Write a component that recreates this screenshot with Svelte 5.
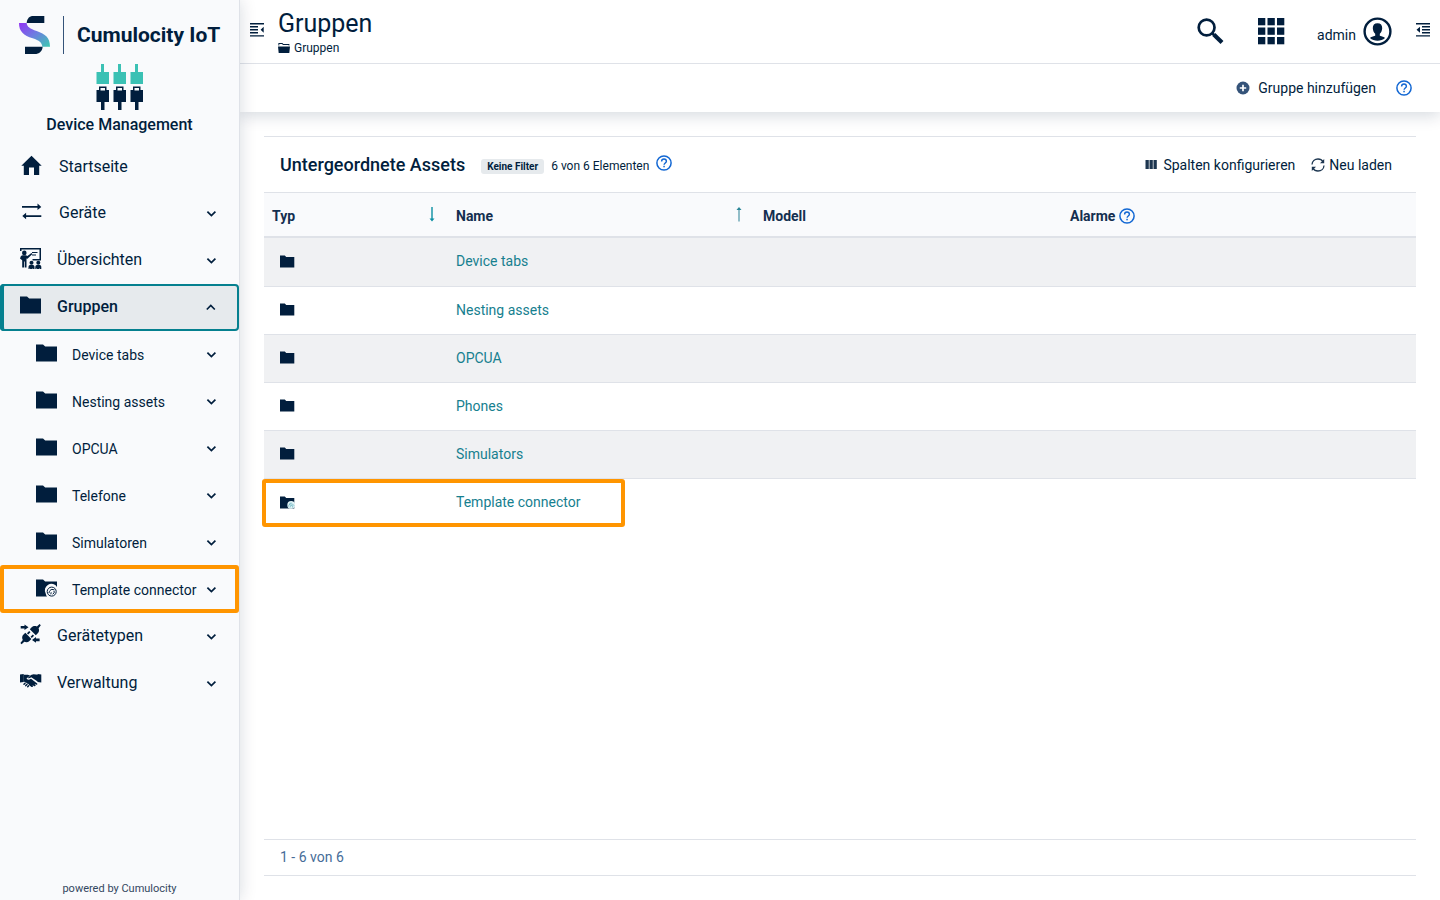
<script>
  const nav = [
    { label: 'Startseite', icon: 'home', wide: true },
    { label: 'Geräte', icon: 'swap', wide: true, expandable: true },
    { label: 'Übersichten', icon: 'board', expandable: true },
    {
      label: 'Gruppen',
      icon: 'folder',
      expandable: true,
      active: true,
      children: [
        { label: 'Device tabs' },
        { label: 'Nesting assets' },
        { label: 'OPCUA' },
        { label: 'Telefone' },
        { label: 'Simulatoren' },
        { label: 'Template connector', smart: true, marked: true }
      ]
    },
    { label: 'Gerätetypen', icon: 'plugs', expandable: true },
    { label: 'Verwaltung', icon: 'hands', expandable: true }
  ];

  const assets = [
    { name: 'Device tabs' },
    { name: 'Nesting assets' },
    { name: 'OPCUA' },
    { name: 'Phones' },
    { name: 'Simulators' },
    { name: 'Template connector', smart: true, marked: true }
  ];
</script>

{#snippet chevron(up)}
  <svg class="chevron" width="12" height="12" viewBox="0 0 12 12" aria-hidden="true">
    <path d={up ? 'M1.800 7.500l4-4 4 4' : 'M2.400 3.600l4 4 4-4'} fill="none" stroke="currentColor" stroke-width="1.700" />
  </svg>
{/snippet}

{#snippet help()}
  <svg width="16" height="16" viewBox="0 0 16 16" aria-hidden="true">
    <circle cx="8" cy="8" r="7.1" fill="none" stroke="currentColor" stroke-width="1.5" />
    <path d="M5.6 6.4C5.6 4.9 6.6 4 8 4s2.4.9 2.4 2.2c0 1.7-2.3 1.9-2.3 3.6" fill="none" stroke="currentColor" stroke-width="1.4" />
    <rect x="7.3" y="10.8" width="1.5" height="1.5" fill="currentColor" />
  </svg>
{/snippet}

{#snippet navIcon(name)}
  <svg width="22" height="23" viewBox="0 0 22 23" fill="currentColor" aria-hidden="true">
    {#if name === 'home'}
      <path d="M11.5 .8L1.3 10.8h2.5V20H9v-7.6h5V20h5.2v-9.2h2.5z" />
    {:else if name === 'swap'}
      <path d="M2 5h15.500V2.600L21.300 5.900l-3.800 3.200V6.800H2zM21.300 14.200H6.100v-2.400L2.300 15l3.800 3.300V16h15.200z" />
    {:else if name === 'board'}
      <path d="M0 0h21v12.500h-8.500v-1.500h7V1.500H1.500V3H0z" />
      <path d="M12 4h5.500v1.100H12zM12 6.500h4v1.100h-4z" />
      <circle cx="4.300" cy="4.900" r="2.300" />
      <path d="M.800 8.300c.7-.9 1.500-1 2.800-1h2.300l1.500.8 4-3.200 1 1.200-4.900 4.600-1-.3V19.500H4.800v-6h-.7v6H2.200v-7.300L0 10.500z" />
      <circle cx="11.500" cy="14.700" r="2" />
      <circle cx="18.300" cy="14.700" r="2" />
      <path d="M8.500 21v-2c0-1.500 1-2.200 3-2.200s3 .7 3 2.200v2h-1.300l-.3-1-.5 1h-2.200l-.4-1-.3 1zM15.300 21v-2c0-1.500 1-2.200 3-2.200s3 .7 3 2.200v2H20l-.3-1-.5 1H17l-.4-1-.3 1z" />
    {:else if name === 'folder'}
      <path d="M0 1.600h7l2.200 2H21v15H0z" />
    {:else if name === 'smart'}
      <path d="M0 1.600h7l2.200 2H21v5.500a6.300 6.300 0 0 0-11.300 6.400c.2 1.200.6 2.200 1.300 3.100H0z" />
      <circle cx="15.700" cy="13.600" r="4.500" fill="none" stroke="currentColor" stroke-width="1" />
      <path d="M12.900 15.200c.5-2.300 1.500-3.500 3-3.800l2.600.5M18 13l.2 1.800-1.500 1.400M14.800 16.300l.4-2" fill="none" stroke="currentColor" stroke-width="1" />
    {:else if name === 'plugs'}
      <path d="M.700 2h3.800V.5l4 2.800-4 2.800V4.600H.700z" />
      <path d="M19.600 14.600h-3.600v-1.500l-4 2.800 4 2.800v-1.500h3.600z" />
      <path d="M20.800 1.200L19.600 0l-2.700 2.400c-1.900-.9-3.900-.5-5.200.8L9.800 5.200l6 6 2-2c1.300-1.300 1.600-3.200.8-5z" />
      <path d="M.400 19l1.200 1.200 2.700-2.500c1.900.8 3.800.5 5.100-.8l2-2L5.300 8.800l-2 2c-1.300 1.300-1.500 3.300-.5 5.200z" />
      <path d="M7.600 9.800l2.200-2.200M11.200 13.400l2.200-2.200" stroke="currentColor" stroke-width="1.800" />
    {:else if name === 'hands'}
      <path d="M0 3.500l3.700-.6v8L0 11.500zM21.300 3.500l-3.700-.6v8l3.700.6z" />
      <path d="M3.500 3.800h4.300l2.300.8-3.600 3c.7 1.500 2.500 1.500 4.500.2l6.200 4.700c.5.600 0 1.500-.8 1.300l-2-1 1.300 1.500c-.2.900-1 1.100-1.800.700l-1.600-1 .9 1.300c-.4.9-1.300.9-2 .5L9 14c-.2-1-.9-1.300-1.600-1.200-.2-.9-1-1.300-1.800-1-.3-.700-1-1-2.100-1z" />
      <path d="M11 4l2.500-.7 4.500.5v7l-6.800-4.500c-1.200 1-2.500 1.300-3.500.7z" />
      <path d="M4 13.200l1-1M5.800 14.600l1.100-1.200M7.700 15.800l.9-1" fill="none" stroke="currentColor" stroke-width="1.500" stroke-linecap="round" />
    {/if}
  </svg>
{/snippet}

{#snippet smallFolder(smart)}
  <svg width="15" height="13" viewBox="0 0 15 13" fill="currentColor" role="img" aria-label="Gruppe">
    <path d="M0 .4h4.800L6.200 2H14.300v10.400H0z" />
    {#if smart}
      <circle cx="11.200" cy="8.900" r="3.900" fill="#e2f4f6" />
      <path d="M8.500 10.500c.5-2 1.400-3.400 3-3.600M9 8l3.500 0 1.700 1.800M10 11.500l.6-2 2 .2.200 2" fill="none" stroke="#6cb4c2" stroke-width=".8" />
    {/if}
  </svg>
{/snippet}

<div class="app">
  <aside class="sidebar">
    <div class="brand">
      <svg width="31" height="38" viewBox="57 48 93 114" aria-hidden="true">
        <defs>
          <linearGradient id="ribbon" x1="0" y1="0" x2="1" y2="1">
            <stop offset="0" stop-color="#9333f5" />
            <stop offset=".5" stop-color="#6c7fe0" />
            <stop offset="1" stop-color="#3cc8b0" />
          </linearGradient>
        </defs>
        <path d="M80 69c1-13 8-21 20-21h33v21z" fill="#011e3d" />
        <path d="M57 69h23c1 12 10 17 30 24 26 9 40 20 40 47h-23c-1-12-9-18-29-25-27-9-41-20-41-46z" fill="url(#ribbon)" />
        <path d="M75 140h53c-1 13-10 22-24 22H75z" fill="#011e3d" />
      </svg>
      <span class="brand-name">Cumulocity IoT</span>
    </div>

    <div class="product">
      <svg width="48" height="48" viewBox="0 0 48 48" aria-hidden="true">
        {#each [0, 17, 34] as x}
          <path d="M{x + 5} 1h3v8h5v12h-12.500V9h4.500z" fill="#3bc1b4" />
          <path d="M{x + 3} 23.500h7.500V27h2.500v12h-4.500v8h-3.500v-8h-4.500V27h2.500zM{x + 4.500} 25v2.500h4.500V25z" fill="#011e3d" fill-rule="evenodd" />
        {/each}
      </svg>
      <span>Device Management</span>
    </div>

    <nav aria-label="Hauptnavigation">
      {#each nav as item}
        <button class="item" class:active={item.active} class:leaf={!item.expandable} aria-expanded={item.expandable ? !!item.active : undefined}>
          <span class="entry" class:wide={item.wide}>
            {@render navIcon(item.icon)}
            <span>{item.label}</span>
          </span>
          {#if item.expandable}{@render chevron(item.active)}{/if}
        </button>
        {#each item.children ?? [] as child}
          <button class="item child" class:marked={child.marked} aria-expanded="false">
            <span class="entry">
              {@render navIcon(child.smart ? 'smart' : 'folder')}
              <span>{child.label}</span>
            </span>
            {@render chevron(false)}
          </button>
        {/each}
      {/each}
    </nav>

    <p class="powered">powered by Cumulocity</p>
  </aside>

  <div class="main">
    <header class="topbar">
      <button class="icon toggle" aria-label="Navigation umschalten">
        <svg width="14" height="14" viewBox="0 0 14 14" fill="currentColor" aria-hidden="true">
          <path d="M0 0h14v1.400H0zM0 3.100h8v1.400H0zM0 6.100h8v1.400H0zM0 9.100h8v1.400H0zM0 12.200h14v1.400H0zM13.700 3.700v6L10.600 6.700z" />
        </svg>
      </button>
      <div class="heading">
        <h1>Gruppen</h1>
        <a class="crumb" href="#gruppen">
          <svg width="12" height="10" viewBox="0 0 12 10" fill="currentColor" aria-hidden="true">
            <path d="M.400 0h4l1 1h6v1.600H10.500V1.900H5L4 .9H1.300v1.700H.400zM0 3.500h12L11.300 10H.700z" />
          </svg>
          Gruppen
        </a>
      </div>
      <div class="tools">
        <button class="icon search" aria-label="Suchen">
          <svg width="27" height="27" viewBox="0 0 27 27" fill="none" stroke="currentColor" aria-hidden="true">
            <circle cx="9.600" cy="9.500" r="7.900" stroke-width="2.700" />
            <path d="M15 15l2 2" stroke-width="2.500" />
            <path d="M16.800 16.600l8.200 8" stroke-width="4.200" />
          </svg>
        </button>
        <button class="icon" aria-label="Anwendungen">
          <svg width="27" height="27" viewBox="0 0 27 27" fill="currentColor" aria-hidden="true">
            {#each [0, 9.500, 19] as x}
              {#each [0, 9.500, 19] as y}
                <rect {x} {y} width="7.300" height="7.300" />
              {/each}
            {/each}
          </svg>
        </button>
        <button class="user">
          <span>admin</span>
          <svg width="29" height="29" viewBox="0 0 29 29" aria-hidden="true">
            <circle cx="14.500" cy="14.500" r="12.900" fill="none" stroke="currentColor" stroke-width="2.400" />
            <path d="M14.500 6.300c3.200 0 4.800 2 4.700 4.900-.1 2.200-1 4.300-2.400 5.500v2.100c2.300.6 4.300 1 5.200 2.300-1.900 1.700-4.600 2.700-7.500 2.700S8.900 22.800 7 21.100c.9-1.300 2.900-1.700 5.200-2.300v-2.100c-1.400-1.200-2.300-3.300-2.400-5.500-.1-2.900 1.500-4.900 4.700-4.900z" fill="currentColor" />
          </svg>
        </button>
        <button class="icon toggle" aria-label="Rechte Leiste umschalten">
          <svg width="14" height="14" viewBox="0 0 14 14" fill="currentColor" aria-hidden="true">
            <path d="M0 0h14v1.400H0zM6 3.100h8v1.400H6zM6 6.100h8v1.400H6zM6 9.100h8v1.400H6zM0 12.200h14v1.400H0zM4 3.700v6L.500 6.700z" />
          </svg>
        </button>
      </div>
    </header>

    <div class="actionbar">
      <button class="action">
        <svg width="14" height="14" viewBox="0 0 14 14" aria-hidden="true">
          <circle cx="7" cy="7" r="6.500" fill="#355379" />
          <path d="M7 3.800v6.400M3.800 7h6.400" stroke="#fff" stroke-width="1.700" />
        </svg>
        Gruppe hinzufügen
      </button>
      <button class="icon info" aria-label="Hilfe">{@render help()}</button>
    </div>

    <main>
      <section class="card">
        <div class="card-head">
          <h2>Untergeordnete Assets</h2>
          <span class="badge">Keine Filter</span>
          <span class="count">6 von 6 Elementen</span>
          <button class="icon info raised" aria-label="Hilfe zu Filtern">{@render help()}</button>
          <div class="card-actions">
            <button class="columns">
              <svg width="12" height="12" viewBox="0 0 12 12" fill="#1d3650" aria-hidden="true">
                <path d="M.500 1h3.300v9H.500zM4.500 1h3.300v9H4.500zM8.500 1h3.300v9H8.500z" />
              </svg>
              Spalten konfigurieren
            </button>
            <button class="reload">
              <svg width="14" height="14" viewBox="0 0 14 14" fill="none" stroke="#1d3650" stroke-width="1.300" aria-hidden="true">
                <path d="M1 6.500C1.200 3.300 3.800 1 7 1c2.200 0 4 1 5 2.700M13 7.500C12.800 10.700 10.200 13 7 13c-2.200 0-4-1-5-2.700" />
                <path d="M13.200 1v4.200H9zM.800 13V8.800H5z" fill="#1d3650" stroke="none" />
              </svg>
              Neu laden
            </button>
          </div>
        </div>

        <table>
          <thead>
            <tr>
              <th class="type" scope="col" aria-sort="descending">
                <div class="th">
                  Typ
                  <svg width="8" height="17" viewBox="0 0 8 17" aria-hidden="true">
                    <path d="M4 0v12" stroke="#0b8fa3" stroke-width="1.400" /><path d="M1.500 11.500h5L4 14.500z" fill="#0b8fa3" />
                  </svg>
                </div>
              </th>
              <th class="mid" scope="col" aria-sort="ascending">
                <div class="th">
                  Name
                  <svg width="8" height="17" viewBox="0 0 8 17" aria-hidden="true">
                    <path d="M4 2v12.500" stroke="#4c94a5" stroke-width="1.200" /><path d="M1.500 3h5L4 0z" fill="#2a8697" />
                  </svg>
                </div>
              </th>
              <th class="mid" scope="col">Modell</th>
              <th scope="col">
                <div class="th start">Alarme <button class="icon info" aria-label="Hilfe zu Alarmen">{@render help()}</button></div>
              </th>
            </tr>
          </thead>
          <tbody>
            {#each assets as asset}
              <tr class:marked={asset.marked}>
                <td class="kind">{@render smallFolder(asset.smart)}</td>
                <td><a href="#asset">{asset.name}</a></td>
                <td></td>
                <td></td>
              </tr>
            {/each}
          </tbody>
        </table>

        <footer>1 - 6 von 6</footer>
      </section>
    </main>
  </div>
</div>

<style>
  :global(body) {
    background: #fff;
    color: #011e3d;
    font: 14px/20px Roboto, sans-serif;
  }
  button {
    display: flex;
    align-items: center;
    margin: 0;
    padding: 0;
    border: 0;
    background: none;
    color: inherit;
    font: inherit;
    cursor: pointer;
  }
  svg {
    display: block;
    flex: none;
  }
  h1,
  h2,
  p {
    margin: 0;
    font-weight: 400;
  }
  a {
    text-decoration: none;
  }

  .app {
    display: flex;
    min-height: 100vh;
  }
  .sidebar {
    box-sizing: border-box;
    flex: 0 0 240px;
    display: flex;
    flex-direction: column;
    position: relative;
    z-index: 2;
    border-right: 1px solid #dfe2e8;
    background: #f9fafc;
    box-shadow: 0 0 16px rgba(1, 30, 61, 0.16);
  }
  .brand {
    display: flex;
    align-items: stretch;
    gap: 13px;
    padding: 16px 0 0 19px;
  }
  .brand-name {
    border-left: 1px solid #355379;
    padding-left: 13px;
    font-size: 21px;
    line-height: 38px;
    font-weight: 700;
    white-space: nowrap;
  }
  .product {
    display: flex;
    flex-direction: column;
    align-items: center;
    gap: 4px;
    padding: 9px 0;
    font-size: 16px;
    font-weight: 500;
  }
  .product span {
    line-height: 20px;
  }
  nav {
    margin-top: -1px;
  }
  .item {
    box-sizing: border-box;
    position: relative;
    width: 100%;
    height: 47px;
    justify-content: space-between;
    padding: 0 22px 0 20px;
    font-size: 16px;
    text-align: left;
    white-space: nowrap;
  }
  .entry {
    display: flex;
    align-items: center;
    gap: 15px;
    padding-bottom: 2px;
  }
  .entry.wide {
    gap: 17px;
  }
  .leaf .entry,
  .child .entry {
    padding-bottom: 0;
  }
  .active {
    border-radius: 4px;
    background: #e6eaed;
    box-shadow: inset 4px 0 #05808f, inset 0 0 0 2px #05808f;
    font-weight: 500;
  }
  .child {
    padding-left: 36px;
    font-size: 14px;
  }
  .child .entry {
    gap: 14px;
  }
  .child.marked::after {
    content: '';
    position: absolute;
    inset: -1px 0 0;
    border: 4px solid #ff9500;
    border-radius: 3px;
  }
  .powered {
    margin-top: auto;
    padding-bottom: 1px;
    color: #33475f;
    font-size: 11px;
    text-align: center;
  }

  .main {
    flex: 1;
    min-width: 0;
    display: flex;
    flex-direction: column;
  }
  .topbar {
    display: flex;
    align-items: center;
    height: 63px;
    padding: 0 10px;
    border-bottom: 1px solid #dfe2e8;
  }
  .toggle {
    padding-bottom: 3px;
  }
  .heading {
    margin-left: 14px;
    padding-top: 1px;
  }
  h1 {
    font-size: 25px;
    line-height: 32px;
  }
  .crumb {
    display: flex;
    align-items: center;
    gap: 4px;
    color: inherit;
    font-size: 12px;
    line-height: 16px;
  }
  .tools {
    display: flex;
    align-items: center;
    margin-left: auto;
    gap: 32px;
  }
  .search {
    padding-right: 2px;
  }
  .user {
    gap: 7px;
    margin-right: -8px;
  }
  .user span {
    padding-top: 6px;
  }
  .actionbar {
    display: flex;
    align-items: center;
    justify-content: flex-end;
    gap: 20px;
    height: 48px;
    padding: 0 28px;
    box-shadow: 0 4px 16px rgba(1, 30, 61, 0.16);
    clip-path: inset(0 0 -40px);
  }
  .action {
    gap: 8px;
  }
  .info {
    color: #1267d3;
  }

  main {
    flex: 1;
    display: flex;
    padding: 24px;
  }
  .card {
    flex: 1;
    min-width: 0;
    display: flex;
    flex-direction: column;
    border: solid #dfe2e8;
    border-width: 1px 0;
  }
  .card-head {
    display: flex;
    align-items: center;
    height: 55px;
    padding: 0 24px 0 16px;
  }
  h2 {
    font-size: 18px;
    font-weight: 500;
  }
  .badge {
    margin-left: 16px;
    padding: 0 6px;
    border-radius: 3px;
    background: #e6eaed;
    font-size: 10px;
    line-height: 15px;
    font-weight: 700;
    margin-top: 3px;
  }
  .count {
    margin: 2px 7px 0;
    font-size: 12px;
  }
  .raised {
    margin-bottom: 4px;
  }
  .card-actions {
    display: flex;
    gap: 16px;
    margin-left: auto;
  }
  .columns {
    gap: 6px;
  }
  .reload {
    gap: 4px;
  }

  table {
    width: 100%;
    table-layout: fixed;
    border-collapse: separate;
    border-spacing: 0;
  }
  .type {
    width: 184px;
  }
  .mid {
    width: 307px;
  }
  th,
  td {
    box-sizing: border-box;
    padding: 0 8px;
    text-align: left;
  }
  th {
    height: 46px;
    border-top: 1px solid #dfe2e8;
    border-bottom: 2px solid #dfe2e8;
    background: #f9fafc;
    color: #142f50;
    font-weight: 700;
    padding-top: 2px;
  }
  .th {
    display: flex;
    align-items: center;
    justify-content: space-between;
    padding-right: 4px;
  }
  .th.start {
    justify-content: flex-start;
    gap: 4px;
  }
  td {
    height: 48px;
    padding-bottom: 2px;
    border-bottom: 1px solid #dfe2e8;
  }
  tbody tr:first-child td {
    height: 49px;
  }
  tbody tr:last-child td {
    border-bottom: 0;
  }
  tbody tr:nth-child(odd) {
    background: #f0f1f3;
  }
  td a {
    color: #16808f;
  }
  .kind {
    position: relative;
    padding-left: 16px;
  }
  .marked .kind::after {
    content: '';
    box-sizing: border-box;
    position: absolute;
    inset: 0 auto 0 -2px;
    width: 363px;
    border: 4px solid #ff9500;
    border-radius: 3px;
    pointer-events: none;
  }
  footer {
    margin-top: auto;
    padding: 7px 16px 8px;
    border-top: 1px solid #dfe2e8;
    color: #466c98;
  }
</style>
